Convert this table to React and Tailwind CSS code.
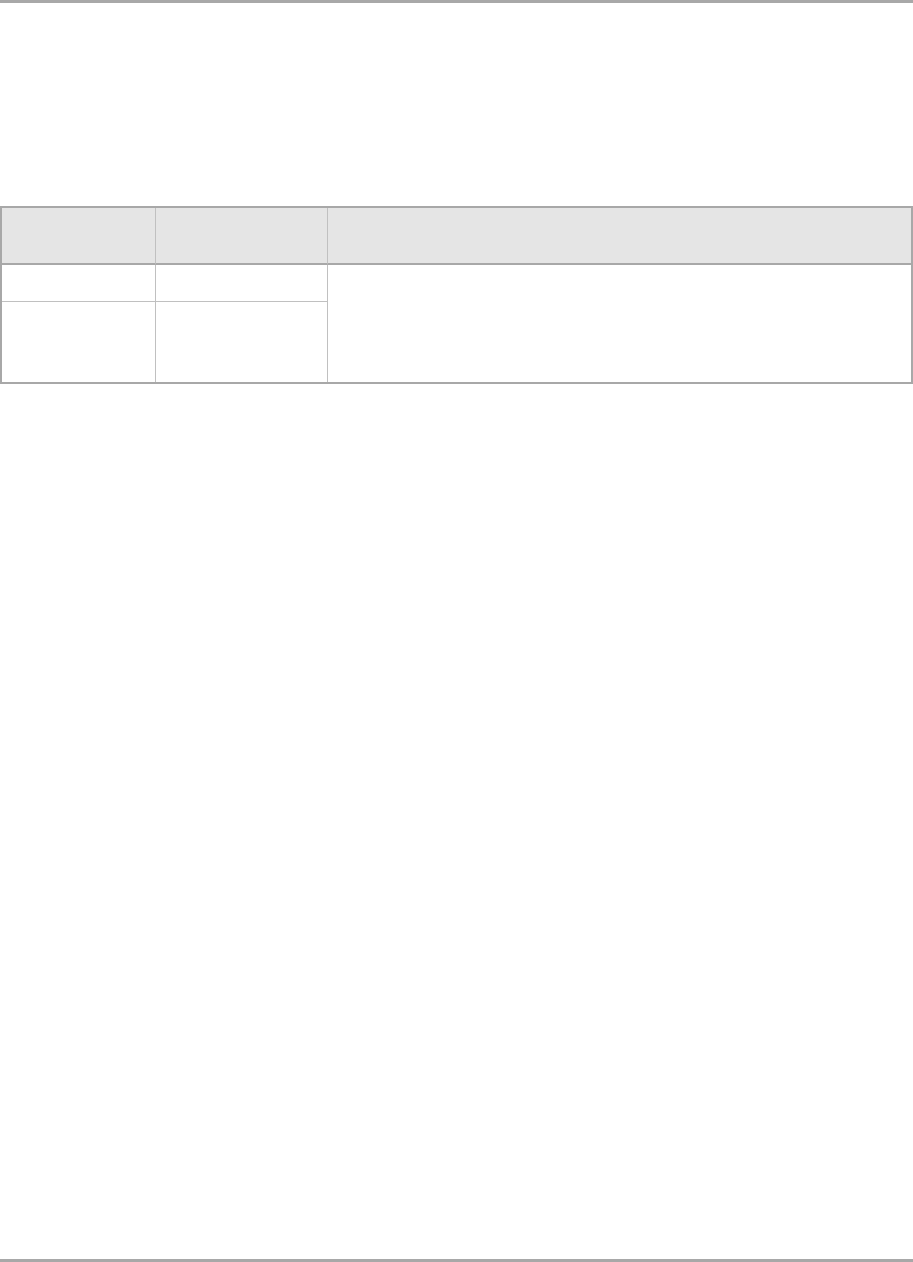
export default function App() {
  return (
    <div className="flex min-h-screen flex-col bg-white" style={{ fontFamily: '"Liberation Sans", Arial, sans-serif' }}>
      <div className="h-[3px] w-full bg-[#a8a8a8]" />
      <div className="mt-[203px] grid grid-cols-[154px_172px_1fr] grid-rows-[57px_37px_80px] border-2 border-[#a8a8a8]">
        <div className="border-b-2 border-r border-b-[#a8a8a8] border-r-[#c0c0c0] bg-[#e5e5e5]" />
        <div className="border-b-2 border-r border-b-[#a8a8a8] border-r-[#c0c0c0] bg-[#e5e5e5]" />
        <div className="border-b-2 border-b-[#a8a8a8] bg-[#e5e5e5]" />
        <div className="border-b border-r border-[#c0c0c0]" />
        <div className="border-b border-r border-[#c0c0c0]" />
        <div className="row-span-2" />
        <div className="border-r border-[#c0c0c0]" />
        <div className="border-r border-[#c0c0c0]" />
      </div>
      <div className="flex-1" />
      <div className="h-[3px] w-full bg-[#a8a8a8]" />
    </div>
  );
}
